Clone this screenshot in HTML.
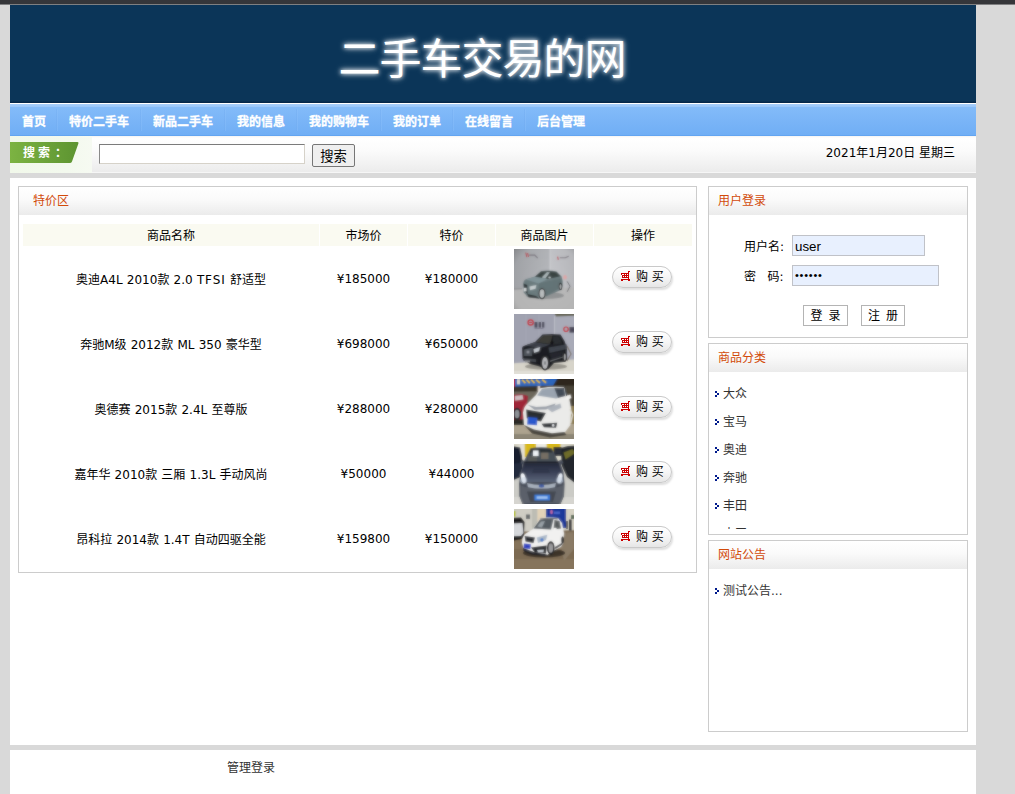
<!DOCTYPE html>
<html lang="zh-CN">
<head>
<meta charset="utf-8">
<title>二手车交易的网</title>
<style>
*{box-sizing:border-box;margin:0;padding:0}
html,body{width:1015px;height:794px;overflow:hidden}
body{background:#d9d9d9;font-family:"DejaVu Sans","Noto Sans CJK SC",sans-serif;font-size:12px;color:#000;position:relative}
.abs{position:absolute}
#topbar{left:0;top:0;width:1015px;height:5px;background:linear-gradient(#35363a 0,#35363a 4px,rgba(53,54,58,.55) 4px,rgba(53,54,58,.55) 5px);z-index:5}
#banner{left:10px;top:5px;width:966px;height:98px;background:linear-gradient(#0b3558 0,#0b3558 96px,#06284a 97px,#06284a 98px)}
#title{left:-11px;top:25px;width:966px;text-align:center;color:#fff;font-size:42px;line-height:60px;letter-spacing:-1px;font-family:"Liberation Sans","Noto Sans CJK SC",sans-serif;text-shadow:0 0 4px #fff,0 0 7px rgba(255,255,255,.6)}
#nav{left:10px;top:103px;width:966px;height:33px;background:linear-gradient(#fff 0,#fff 1px,#a8cffb 1px,#98c6fa 4px,#83bbf9 4px,#70aef5 32px,#63a5f1 32px,#63a5f1 33px)}
.sep{position:absolute;top:6px;width:2px;height:22px;background:linear-gradient(90deg,#6fa9ee 0,#6fa9ee 50%,#8fc2fb 50%,#8fc2fb 100%);opacity:.32}
#nav a{position:absolute;top:0;height:33px;line-height:38px;color:#fff;font-weight:bold;font-size:12px;font-family:"Liberation Sans","Noto Sans CJK SC",sans-serif;text-decoration:none;white-space:nowrap;-webkit-text-stroke:.3px #fff}
#search{left:10px;top:136px;width:966px;height:37px;background:linear-gradient(#f3f3f3 0,#fff 2px,#fbfbfb 40%,#ececec 35.5px,#f6f6f6 36px,#f6f6f6 37px)}
#main{left:10px;top:178px;width:966px;height:567px;background:#fff}
#footer{left:10px;top:750px;width:966px;height:44px;background:#fff}
.panel{border:1px solid #ccc;background:#fff}
.ptitle{position:absolute;left:0;top:0;right:0;height:28px;background:linear-gradient(#fff 0,#fafafa 45%,#ebebeb 100%);color:#d24a0a;font-size:12px;line-height:29px}

#slabelbg{left:0;top:0;width:82px;height:37px;background:linear-gradient(90deg,#f1f8ea 0,#f3f9ee 70%,#f6faf2 100%)}
#slabel{left:0;top:6px;width:69px;height:21px}
#slabeltxt{left:13px;top:7px;width:60px;height:21px;line-height:21px;color:#fff;font-weight:bold;font-size:12px;font-family:"Liberation Serif","Noto Sans CJK SC",sans-serif;white-space:nowrap;letter-spacing:0}
#q{left:89px;top:8px;width:206px;height:20px;border:1px solid #d6d2c9;border-top-color:#7b7b7b;border-left-color:#8a8a8a;background:#fff}
#qbtn{left:302px;top:8px;width:43px;height:23px;border:1px solid #767676;border-radius:2px;background:#efefef;font-size:13.333px;line-height:23px;text-align:center;font-family:"Liberation Sans","Noto Sans CJK SC",sans-serif;color:#000;overflow:hidden}
#date{right:21px;top:8px;height:18px;line-height:18px;font-size:12px;white-space:nowrap}
#special{left:8px;top:8px;width:679px;height:387px}
#tbl{position:absolute;left:4px;top:37px;width:670px}
.th{position:absolute;top:0;height:22px;background:#fafaf1;text-align:center;line-height:25px;overflow:hidden}
.row{position:absolute;left:0;width:670px;height:65px}
.row div{position:absolute;text-align:center;white-space:nowrap;line-height:16px;height:16px}
.c1{left:0;width:296px;top:25px;word-spacing:.4px}
.c2{left:297px;width:87px;top:24px}
.c3{left:385px;width:87px;top:24px}
.pic{left:491px;top:2px;width:60px;height:60px!important;overflow:hidden}
.buy{left:589px;top:19px;width:60px;height:22px!important;border-radius:11px;border:1px solid #c9c9c9;background:linear-gradient(#ffffff 0,#f6f6f6 50%,#e6e6e6 100%);box-shadow:1px 2px 2px rgba(0,0,0,.13);font-family:"DejaVu Sans","Noto Sans CJK SC",sans-serif;font-size:12px}
.buy span{position:absolute;left:23px;top:2px;line-height:16px;letter-spacing:0}
.buy svg{position:absolute;left:8px;top:4px}

#login{left:698px;top:8px;width:260px;height:152px}
#cats{left:698px;top:165px;width:260px;height:192px;overflow:hidden}
#news{left:698px;top:362px;width:260px;height:192px}
.lbl{position:absolute;line-height:18px;white-space:nowrap}
.inp{position:absolute;height:21px;border:1px solid #c0c2c8;background:#e8f0fe;font-size:13.333px;line-height:21px;overflow:hidden;padding-left:2px;font-family:"Liberation Sans","Noto Sans CJK SC",sans-serif}
.btn2{position:absolute;top:118px;height:21px;border:1px solid #b4b4b4;background:#fff;text-align:center;line-height:21px;font-family:"Liberation Sans","Noto Sans CJK SC",sans-serif;font-size:12px;white-space:nowrap;word-spacing:2.7px}
.li{position:absolute;left:6px;height:18px;line-height:20px;color:#333;padding-left:8px;white-space:nowrap}
.li i{position:absolute;left:0;top:7px;width:4px;height:6px}
.li i svg{display:block}
#catclip{position:absolute;left:0;top:28px;width:258px;height:157px;overflow:hidden}
</style>
</head>
<body>
<div id="topbar" class="abs"></div>
<div id="banner" class="abs"><div id="title" class="abs">二手车交易的网</div></div>
<div id="nav" class="abs">
<span class="sep" style="left:46px"></span><span class="sep" style="left:130px"></span><span class="sep" style="left:214px"></span><span class="sep" style="left:286px"></span><span class="sep" style="left:370px"></span><span class="sep" style="left:442px"></span><span class="sep" style="left:514px"></span>
<a style="left:12px">首页</a>
<a style="left:59px">特价二手车</a>
<a style="left:143px">新品二手车</a>
<a style="left:227px">我的信息</a>
<a style="left:299px">我的购物车</a>
<a style="left:383px">我的订单</a>
<a style="left:455px">在线留言</a>
<a style="left:527px">后台管理</a>
</div>
<div id="search" class="abs">
<div id="slabelbg" class="abs"></div>
<svg id="slabel" class="abs" viewBox="0 0 69 21"><defs><linearGradient id="gg" x1="0" x2="1" y1="0" y2="0"><stop offset="0" stop-color="#7cb342"/><stop offset="1" stop-color="#5d9431"/></linearGradient></defs><path d="M0 0H67.5Q69 0 68.4 1.6L62 19.5Q61.4 21 59.8 21H0Z" fill="url(#gg)"/></svg>
<div id="slabeltxt" class="abs">搜 索 <span style="margin-left:2px">：</span></div>
<div id="q" class="abs"></div>
<div id="qbtn" class="abs">搜索</div>
<div id="date" class="abs">2021年1月20日 星期三</div>
</div>
<div id="main" class="abs">
<div id="special" class="abs panel"><div class="ptitle" style="padding-left:14px">特价区</div>
<div id="tbl">
<div class="th" style="left:0;width:296px">商品名称</div><div class="th" style="left:297px;width:87px">市场价</div><div class="th" style="left:385px;width:87px">特价</div><div class="th" style="left:473px;width:97px">商品图片</div><div class="th" style="left:571px;width:98px">操作</div>
<div class="row" style="top:23px"><div class="c1">奥迪A4L 2010款 2.0 <span style="letter-spacing:.9px">TFSI</span> 舒适型</div><div class="c2">¥185000</div><div class="c3">¥180000</div><div class="pic" id="pic1"><svg width="60" height="60" viewBox="0 0 60 60" style="display:block"><defs><filter id="bl1" x="-20%" y="-20%" width="140%" height="140%"><feGaussianBlur stdDeviation="0.85"/></filter></defs><g id="car1"><defs><radialGradient id="v1" cx="55%" cy="55%" r="75%"><stop offset="0" stop-color="#000" stop-opacity="0"/><stop offset=".7" stop-color="#000" stop-opacity=".03"/><stop offset="1" stop-color="#000" stop-opacity=".26"/></radialGradient><linearGradient id="w1" x1="0" x2="1"><stop offset="0" stop-color="#a2a4a8"/><stop offset="1" stop-color="#b6b8bc"/></linearGradient><linearGradient id="w1b" x1="0" x2="1"><stop offset="0" stop-color="#c6c7cb"/><stop offset="1" stop-color="#b8b9bd"/></linearGradient></defs><rect x="-5" y="-5" width="41" height="50" fill="url(#w1)"/><rect x="36" y="-5" width="30" height="50" fill="url(#w1b)"/><rect x="35.6" y="-5" width=".9" height="43" fill="#d3d4d7"/><path d="M-5 40.4L36 38.6L65 38.8V65H-5Z" fill="#bababa"/><path d="M-5 40.2L8 39.8" stroke="#8e8f92" stroke-width="1"/><g opacity=".75"><path d="M11.8 3.6l1 4.6M13.6 4l.9 4" stroke="#c22a35" stroke-width="1" fill="none"/><path d="M15.2 6.2h5.5l3 3" stroke="#6c6670" stroke-width="1.2" fill="none"/><path d="M43.6 7.6l.7 3.2" stroke="#c22a35" stroke-width="1.1" fill="none"/><path d="M45.8 8.8h5.5l3.4-1.6" stroke="#6c6670" stroke-width="1.1" fill="none"/></g><ellipse cx="51" cy="28.3" rx="1.8" ry="2.2" fill="#e8a4a4" opacity=".8"/><path d="M53.2 32.4l2.8 4.8-2.8 5.6" stroke="#66676b" stroke-width=".9" fill="none"/><ellipse cx="31" cy="46.5" rx="19" ry="3.6" fill="#8a8c8d" opacity=".8"/><path d="M9.2 36Q9 31.5 12 30.3L21 27.6L27 22.2Q35 20.6 42.6 22.6L47.6 27.4Q49 31 48.6 37L47 41L33 47L26 49.6L14 48L9.6 43.5Z" fill="#6d7d80"/><path d="M25 34L48 29.5L48.4 37L33 46.5L25 49Z" fill="#647477"/><path d="M21 27.8L27 22.6Q35 21 42.4 23L46.4 27.2L34 30Z" fill="#3b4544"/><path d="M27.6 28.6L33 23L36 23.2L31.4 29.4Z" fill="#aab5b7"/><path d="M12 30.4L21 27.8L34 30L24.6 34.6Z" fill="#82959a"/><path d="M9.6 34.6L10.4 41L13.6 45.6L13.2 36Z" fill="#2c3436"/><rect x="9.7" y="38.8" width="2.9" height="3.6" fill="#d6dadb"/><path d="M15.4 37.4L22.4 36L21.6 39.8L16 41.2Z" fill="#c9d0d2"/><path d="M13.2 45L22 47L25.6 49.4L14.6 48.2Z" fill="#2e3436"/><ellipse cx="28" cy="44.6" rx="3.5" ry="5.7" fill="#2b2f31"/><ellipse cx="28" cy="44.6" rx="2.5" ry="4.4" fill="#bcc0c1"/><ellipse cx="46.5" cy="37.4" rx="1.8" ry="3.7" fill="#2b2f31"/><ellipse cx="46.5" cy="37.4" rx="1" ry="2.5" fill="#b2b6b7"/><ellipse cx="35.6" cy="28.4" rx="1.3" ry="1" fill="#c6ced0"/><rect x="-5" y="-5" width="70" height="70" fill="url(#v1)"/></g><use href="#car1" filter="url(#bl1)" opacity="0.65"/></svg></div><div class="buy"><svg width="10" height="10" viewBox="0 0 10 10" shape-rendering="crispEdges"><path d="M7 0h2v1h-1v7h1v2h-2v-1h-5v1h-2v-2h7v-1h-6v-3h-1v-2h7z" fill="#cc0000"/><path d="M1.4 3.1h1.5v.8h-1.5zM4 3h1v1h-1zM6 3h1v1h-1zM2 5h1v1h-1zM4 5h1v1h-1zM6 5h1v1h-1z" fill="#fff"/></svg><span>购 买</span></div></div>
<div class="row" style="top:88px"><div class="c1">奔驰M级 2012款 ML 350 豪华型</div><div class="c2">¥698000</div><div class="c3">¥650000</div><div class="pic" id="pic2"><svg width="60" height="60" viewBox="0 0 60 60" style="display:block"><defs><filter id="bl2" x="-20%" y="-20%" width="140%" height="140%"><feGaussianBlur stdDeviation="0.85"/></filter></defs><g id="car2"><rect x="-5" y="-5" width="70" height="70" fill="#a0a2b0"/><rect x="40.5" y="-5" width="25" height="60" fill="#a9abb8"/><path d="M12 -5V48M25 -5V47" stroke="#a9abb8" stroke-width=".8"/><path d="M40 -2H65V1.5L42 2.5Z" fill="#6b6a5c"/><rect x="40" y="2" width="1" height="44" fill="#bcbec8"/><path d="M-5 49.4L10 48.6L40 46.4L65 45.4V65H-5Z" fill="#d7d4ca"/><path d="M-5 57H65V65H-5Z" fill="#e2e0d8"/><circle cx="16.6" cy="8.4" r="2.6" fill="none" stroke="#c8303a" stroke-width="1.3"/><path d="M15.2 8.4h2.8" stroke="#c8303a" stroke-width="1"/><rect x="20.5" y="8" width="9.8" height="5.6" fill="#4b4a5a"/><rect x="23.4" y="7.5" width="1.3" height="6.5" fill="#a0a2b0"/><rect x="27" y="7.5" width="1.1" height="6.5" fill="#a0a2b0"/><rect x="20.5" y="14.2" width="9" height=".8" fill="#77768a"/><circle cx="52" cy="15.2" r="2.2" fill="none" stroke="#c8303a" stroke-width="1.2"/><rect x="55.5" y="13" width="6" height="5.6" fill="#4b4a5a"/><path d="M53 32l4 8-4 7" stroke="#7d766e" stroke-width="1.2" fill="none"/><ellipse cx="32" cy="52.4" rx="21" ry="3.2" fill="#8a867e" opacity=".8"/><path d="M8 34Q8 32 11 31.4L21 28L28.5 20.6Q37 19.4 46.5 20.4Q51 26 53 34L53.2 46L50 48L40 49L34 55.4L24 52L16 50L8.5 45Z" fill="#1b1d22"/><path d="M11 31.6L21 28.2L36.5 30.4L26 34.2Z" fill="#3c4149"/><path d="M34.5 33.4L52.6 30.2L53 35L35.5 39Z" fill="#3f444d"/><path d="M35.5 40L53 36.4L53 40L38 46Z" fill="#25282e"/><path d="M22 28L28.8 21.4Q34 20.4 38.6 21L36.2 30Z" fill="#3d3d39"/><path d="M38.8 22L45.6 21.6L48.2 29.6L39.2 30.8Z" fill="#2b2d30"/><path d="M9.8 35.4L18.8 33.6L18 42L9.8 42Z" fill="#50545c"/><circle cx="14" cy="38" r="1.5" fill="#8e9299"/><path d="M19.4 35L26.2 33L25.2 37.2L20 39Z" fill="#c3c8cf"/><path d="M9 44L22 45.2L22 48.2L9 46.6Z" fill="#454850"/><rect x="11" y="46.4" width="5" height="2" fill="#8b8d90"/><ellipse cx="31" cy="49" rx="4.4" ry="7.6" fill="#121315"/><ellipse cx="31" cy="49" rx="3" ry="5.9" fill="#b6b7ba"/><ellipse cx="31" cy="49" rx="1" ry="2" fill="#7a7b7e"/><ellipse cx="50.6" cy="43" rx="2" ry="5" fill="#121315"/><ellipse cx="50.8" cy="43" rx="1" ry="3.5" fill="#a8a9ac"/><ellipse cx="38" cy="28.6" rx="1.4" ry="1.4" fill="#0f1012"/><path d="M36 46.6L49 42.4L49 43.6L36 48Z" fill="#6a6c70"/></g><use href="#car2" filter="url(#bl2)" opacity="0.65"/></svg></div><div class="buy"><svg width="10" height="10" viewBox="0 0 10 10" shape-rendering="crispEdges"><path d="M7 0h2v1h-1v7h1v2h-2v-1h-5v1h-2v-2h7v-1h-6v-3h-1v-2h7z" fill="#cc0000"/><path d="M1.4 3.1h1.5v.8h-1.5zM4 3h1v1h-1zM6 3h1v1h-1zM2 5h1v1h-1zM4 5h1v1h-1zM6 5h1v1h-1z" fill="#fff"/></svg><span>购 买</span></div></div>
<div class="row" style="top:153px"><div class="c1">奥德赛 2015款 2.4L 至尊版</div><div class="c2">¥288000</div><div class="c3">¥280000</div><div class="pic" id="pic3"><svg width="60" height="60" viewBox="0 0 60 60" style="display:block"><defs><filter id="bl3" x="-20%" y="-20%" width="140%" height="140%"><feGaussianBlur stdDeviation="0.85"/></filter></defs><g id="car3"><rect x="-5" y="-5" width="70" height="70" fill="#57524a"/><path d="M-5 -5H47L41 7.4L-5 8Z" fill="#2d66bc"/><path d="M46 -5H65V7H39Z" fill="#2e281f"/><rect x="-2" y="-2" width="2.8" height="10" fill="#d42424"/><rect x="3" y="0" width="3" height="5.4" fill="#ddd8c6"/><path d="M8 .6l3.4 3.6M12.4 .4l3.4 3.8M17 .4l3.6 3.8M22 .6l4 3.4M28 .4l4 3.4" stroke="#e6bc3c" stroke-width="1.8" fill="none"/><path d="M-5 7.8L42 6.6L60 6V11L-5 13.5Z" fill="#3a352c"/><path d="M0 12.5H60V24H0Z" fill="#6d685c"/><rect x="23.6" y="7" width="2.6" height="5.4" fill="#dccfc6"/><rect x="52" y="7" width="9" height="42" fill="#4a4438"/><rect x="56" y="27" width="6" height="20" fill="#8d7d52"/><path d="M-5 45H65V65H-5Z" fill="#ada38f"/><path d="M-5 55H65V65H-5Z" fill="#8d8676"/><path d="M-3 17.6Q0 15 9 15.4L14 17L12.6 30L10 40.6L-3 41.4Z" fill="#9f2839"/><path d="M.6 16.8L8.6 16L9.4 20.6L.8 21.8Z" fill="#cdbcc0"/><ellipse cx="3" cy="35" rx="4.1" ry="6.2" fill="#232327"/><ellipse cx="3" cy="35" rx="2.5" ry="4.3" fill="#8e9196"/><path d="M-3 40.6L10 40.4L10.6 46L-3 46Z" fill="#2b2925"/><path d="M9 33.4Q10 27 14 24L22 16L26 9.2Q38 7.2 50 8.2L52.4 14L55.4 20L57.2 30L56.4 46L50.4 54L38 55.4L20 51.4L10 46Z" fill="#ebebe9"/><path d="M23.2 16.6L27.8 10Q38 8 50 9L51 17L42 19.4Z" fill="#9aa4b0"/><path d="M40.4 9L50 9L51 17L44 18.8Z" fill="#434b56"/><path d="M51.6 10.4L53.4 16.4L52 18L50.8 10Z" fill="#2e333a"/><path d="M13.6 25.8L22 28L32 27.6L41.6 24.6L40.4 27.2L32 30.4L20.6 30.8Z" fill="#979da6"/><path d="M32.6 29L46.4 24.4L47.4 28.8L38 33.2Z" fill="#aeb4bc"/><path d="M12.2 30.6L31.8 34L27 42.4L12.8 39.2Z" fill="#2b2e33"/><rect x="13.4" y="38.4" width="9.8" height="7.4" fill="#2b58cc" transform="rotate(4 18 42)"/><path d="M27.6 44.8L43.2 43.8L42 48.8L30 48.2Z" fill="#2f3236"/><circle cx="39.2" cy="46.4" r="1.3" fill="#eceef0"/><path d="M10 46L20 50.6L38 54.2L50.4 53L52.4 56L36 58.4L18 54.4Z" fill="#4a463f"/><path d="M52 17l4.4-1.6 1 3.6-4.2 2.2Z" fill="#f3f3f1"/><path d="M56 30l2.6 6-2 8.4" stroke="#dcd9cf" stroke-width="1.5" fill="none"/></g><use href="#car3" filter="url(#bl3)" opacity="0.65"/></svg></div><div class="buy"><svg width="10" height="10" viewBox="0 0 10 10" shape-rendering="crispEdges"><path d="M7 0h2v1h-1v7h1v2h-2v-1h-5v1h-2v-2h7v-1h-6v-3h-1v-2h7z" fill="#cc0000"/><path d="M1.4 3.1h1.5v.8h-1.5zM4 3h1v1h-1zM6 3h1v1h-1zM2 5h1v1h-1zM4 5h1v1h-1zM6 5h1v1h-1z" fill="#fff"/></svg><span>购 买</span></div></div>
<div class="row" style="top:218px"><div class="c1">嘉年华 2010款 三厢 1.3L 手动风尚</div><div class="c2">¥50000</div><div class="c3">¥44000</div><div class="pic" id="pic4"><svg width="60" height="60" viewBox="0 0 60 60" style="display:block"><defs><filter id="bl4" x="-20%" y="-20%" width="140%" height="140%"><feGaussianBlur stdDeviation="0.85"/></filter></defs><g id="car4"><defs><linearGradient id="h4" x1="0" x2="0" y1="0" y2="1"><stop offset="0" stop-color="#25293a"/><stop offset=".45" stop-color="#394056"/><stop offset="1" stop-color="#5c667a"/></linearGradient></defs><rect x="-5" y="-5" width="70" height="70" fill="#cbcbc6"/><rect x="-5" y="-5" width="70" height="24" fill="#dcd9cb"/><rect x="10.5" y="-5" width="11.5" height="18" fill="#d9ba1c"/><rect x="32.5" y="-5" width="14" height="12.5" fill="#d9ba1c"/><rect x="22" y="-5" width="10.5" height="9" fill="#efeee6"/><rect x="5.5" y="-5" width="5" height="20" fill="#e6e3d8"/><path d="M-5 1.5L6 3.5L8 12L8.5 22L6.5 33L-5 38Z" fill="#191f2e"/><path d="M-5 20L8 19L6.5 32L-5 37Z" fill="#222a3e"/><path d="M46.5 4L54 2L65 1.5V42L53 33L48 22Z" fill="#23272d"/><path d="M39.5 3h8v9h-8z" fill="#2b2f37"/><path d="M49.5 8.5l9-3.5 3 4-10 6.5z" fill="#6e6c2a"/><path d="M10 17L16.5 4.2Q27 2.4 37.8 4.2L44 17L47.5 15.5L49.5 18.5L47 21L49.5 28L50.6 40L50 52L47 59L41 61.5H14L8 59L5.4 52L5 40L6.6 28L9 21L6.5 18.5L8.5 15.5Z" fill="#4a505c"/><path d="M11.5 17.6L17 5Q27 3.3 37.2 5L43 17.6Z" fill="#475056"/><path d="M17 5Q27 3.3 37.2 5L38.6 8.4H15.6Z" fill="#2c3236"/><rect x="19" y="6.4" width="5.6" height="5.6" fill="#eef3f6"/><rect x="27" y="8.6" width="7.5" height="6.4" fill="#756e64"/><rect x="14" y="12" width="9" height="5" fill="#565a58"/><path d="M10.5 17.4H44L44.6 19.6H9.9Z" fill="#1a1d26"/><path d="M9.8 19.4H44.8L48.8 31L49.6 38H6.2L7 31Z" fill="url(#h4)"/><path d="M20 24h14l2 5H18z" fill="#2e3448" opacity=".7"/><ellipse cx="9.3" cy="34.2" rx="2.3" ry="5" fill="#f4f8fc" transform="rotate(-14 9.3 34.2)"/><ellipse cx="45.9" cy="34.2" rx="2.3" ry="5" fill="#e9eff6" transform="rotate(14 45.9 34.2)"/><ellipse cx="9.6" cy="36.5" rx="3.4" ry="3.4" fill="#c8d4e2" opacity=".55"/><ellipse cx="45.6" cy="36.5" rx="3.4" ry="3.4" fill="#c8d4e2" opacity=".55"/><path d="M13 39Q27.5 43 42 39L41 43.2Q27.5 46.2 14 43.2Z" fill="#a7b0bc"/><ellipse cx="27.5" cy="41.9" rx="2.8" ry="1.6" fill="#3f5aa2"/><path d="M6 41L14 44Q27.5 47 41 44L49.6 41L50 52L47 59H8L5.4 52Z" fill="#5b616b"/><path d="M13 47.5H42L39 58H16Z" fill="#454a52"/><rect x="20.4" y="50.6" width="15.6" height="5.9" fill="#3b7ada"/><rect x="22.6" y="52.3" width="11" height="2.5" fill="#a6c6f0"/><path d="M8 58.5L14 61.5H41L47 58.5L47 65H8Z" fill="#707276"/><path d="M-5 53H5.4L8 59.5L9 65H-5ZM65 53H50L47 59.5L46.4 65H65Z" fill="#d6d5d0"/></g><use href="#car4" filter="url(#bl4)" opacity="0.65"/></svg></div><div class="buy"><svg width="10" height="10" viewBox="0 0 10 10" shape-rendering="crispEdges"><path d="M7 0h2v1h-1v7h1v2h-2v-1h-5v1h-2v-2h7v-1h-6v-3h-1v-2h7z" fill="#cc0000"/><path d="M1.4 3.1h1.5v.8h-1.5zM4 3h1v1h-1zM6 3h1v1h-1zM2 5h1v1h-1zM4 5h1v1h-1zM6 5h1v1h-1z" fill="#fff"/></svg><span>购 买</span></div></div>
<div class="row" style="top:283px"><div class="c1">昂科拉 2014款 1.4T 自动四驱全能</div><div class="c2">¥159800</div><div class="c3">¥150000</div><div class="pic" id="pic5"><svg width="60" height="60" viewBox="0 0 60 60" style="display:block"><defs><filter id="bl5" x="-20%" y="-20%" width="140%" height="140%"><feGaussianBlur stdDeviation="0.85"/></filter></defs><g id="car5"><rect x="-5" y="-5" width="70" height="70" fill="#cfcdc4"/><rect x="18" y="-5" width="5.5" height="30" fill="#bdbdb4"/><rect x="23.5" y="-5" width="9" height="24" fill="#e3d3b8"/><rect x="32" y="-5" width="20" height="24" fill="#1b399a"/><ellipse cx="37.5" cy="3" rx="1.4" ry="2.2" fill="#c46aa8"/><rect x="40" y="2.5" width="6" height="2.6" fill="#4a66c8"/><rect x="52" y="-5" width="13" height="28" fill="#d6d2c4"/><rect x="57" y="6" width="4" height="4" fill="#5a6a58"/><rect x="-2" y="2" width="3.5" height="5.5" fill="#b7c23a"/><rect x="12" y="5.5" width="4" height="4.5" fill="#64686a"/><path d="M-5 23L65 21V65H-5Z" fill="#7c6a52"/><path d="M-5 30L65 27V40H-5Z" fill="#85735a"/><path d="M-5 50H65V65H-5Z" fill="#86745c"/><path d="M44 24L60 23L60 40L50 52Z" fill="#8a7b66"/><rect x="55" y="10.5" width="2.6" height="11" fill="#2a2a30"/><rect x="52.2" y="12" width="1.6" height="8" fill="#3a3a3e"/><path d="M-3 9L7 8.5L10.5 13L10 26L8 30L-3 32Z" fill="#1b1b1c"/><path d="M-3 14.5L8.5 14L9.5 24L7 27L-3 27.5Z" fill="#d6d8db"/><ellipse cx="30" cy="44" rx="21" ry="4.5" fill="#3d3429"/><path d="M8 34Q8 28 11 25L19 20L26 9.5Q33 7.5 44 9L48 14L50 24L49.5 34L47 38L41 41L33 46L20 44.5L10 41Z" fill="#f1f1f0"/><path d="M19.5 19.5L26 10.5Q32 9.2 39.5 10L37 20.5Z" fill="#555c62"/><path d="M23 17.6L27 12.5L31 12L28 18.4Z" fill="#98a0a6"/><path d="M40.5 11L45.5 12L47 19.5L39.5 20.5Z" fill="#5a5e60"/><path d="M26 9.6Q34 8 44 9.2L43.5 10.5Q34 9 26.5 10.6Z" fill="#6a6c70"/><path d="M10.7 27L20.9 28.5L19.5 34L11.5 32.5Z" fill="#2c2f35"/><path d="M22.6 28.5L33.3 25.8L32 31L24 34Z" fill="#aab8c8"/><ellipse cx="28" cy="31" rx="1.6" ry="1.8" fill="#4a78c8"/><rect x="9.8" y="34.8" width="6.8" height="4.8" fill="#2a3cc0" transform="rotate(6 13 37)"/><path d="M17 38.5L32.6 36.6L32 44.4L21 43.4Z" fill="#1f2126"/><path d="M23 41L30 40.5L29.5 43.5L24 43.5Z" fill="#c9ced4"/><path d="M9 39L20 43L33 45.5L32 47L18 45.5L9.5 42Z" fill="#26262a"/><ellipse cx="36.8" cy="39" rx="3.8" ry="6.8" fill="#1c1c1e"/><ellipse cx="36.8" cy="39" rx="2.4" ry="4.8" fill="#9c9c9e"/><path d="M41 38L48.5 33.5L48.5 35.5L41.5 40Z" fill="#4a4a4c"/><ellipse cx="48.6" cy="31" rx="1.3" ry="3.6" fill="#222"/><ellipse cx="41" cy="20" rx="1.8" ry="1.3" fill="#f7f7f6"/></g><use href="#car5" filter="url(#bl5)" opacity="0.65"/></svg></div><div class="buy"><svg width="10" height="10" viewBox="0 0 10 10" shape-rendering="crispEdges"><path d="M7 0h2v1h-1v7h1v2h-2v-1h-5v1h-2v-2h7v-1h-6v-3h-1v-2h7z" fill="#cc0000"/><path d="M1.4 3.1h1.5v.8h-1.5zM4 3h1v1h-1zM6 3h1v1h-1zM2 5h1v1h-1zM4 5h1v1h-1zM6 5h1v1h-1z" fill="#fff"/></svg><span>购 买</span></div></div>
</div>
</div>
<div id="login" class="abs panel"><div class="ptitle" style="padding-left:9px">用户登录</div>
<div class="lbl" style="left:35px;top:51px">用户名:</div><div class="inp" style="left:83px;top:48px;width:133px">user</div>
<div class="lbl" style="left:35px;top:81px">密&nbsp;&nbsp;&nbsp;码:</div><div class="inp" style="left:83px;top:78px;width:147px;font-size:11px;letter-spacing:.75px;line-height:19px">••••••</div>
<div class="btn2" style="left:94px;width:45px">登 录</div><div class="btn2" style="left:152px;width:44px">注 册</div>
</div>
<div id="cats" class="abs panel"><div class="ptitle" style="padding-left:9px">商品分类</div><div id="catclip"><div class="li" style="top:12px"><i><svg width="4" height="6" viewBox="0 0 4 6" shape-rendering="crispEdges"><path d="M0 0h2v2h-2zM2 2h2v2h-2zM0 4h2v2h-2z" fill="#001a8c"/></svg></i>大众</div><div class="li" style="top:40px"><i><svg width="4" height="6" viewBox="0 0 4 6" shape-rendering="crispEdges"><path d="M0 0h2v2h-2zM2 2h2v2h-2zM0 4h2v2h-2z" fill="#001a8c"/></svg></i>宝马</div><div class="li" style="top:68px"><i><svg width="4" height="6" viewBox="0 0 4 6" shape-rendering="crispEdges"><path d="M0 0h2v2h-2zM2 2h2v2h-2zM0 4h2v2h-2z" fill="#001a8c"/></svg></i>奥迪</div><div class="li" style="top:96px"><i><svg width="4" height="6" viewBox="0 0 4 6" shape-rendering="crispEdges"><path d="M0 0h2v2h-2zM2 2h2v2h-2zM0 4h2v2h-2z" fill="#001a8c"/></svg></i>奔驰</div><div class="li" style="top:124px"><i><svg width="4" height="6" viewBox="0 0 4 6" shape-rendering="crispEdges"><path d="M0 0h2v2h-2zM2 2h2v2h-2zM0 4h2v2h-2z" fill="#001a8c"/></svg></i>丰田</div><div class="li" style="top:152px"><i><svg width="4" height="6" viewBox="0 0 4 6" shape-rendering="crispEdges"><path d="M0 0h2v2h-2zM2 2h2v2h-2zM0 4h2v2h-2z" fill="#001a8c"/></svg></i>本田</div></div></div>
<div id="news" class="abs panel"><div class="ptitle" style="padding-left:9px">网站公告</div><div class="li" style="top:40px"><i><svg width="4" height="6" viewBox="0 0 4 6" shape-rendering="crispEdges"><path d="M0 0h2v2h-2zM2 2h2v2h-2zM0 4h2v2h-2z" fill="#001a8c"/></svg></i>测试公告...</div></div>
</div>
<div id="footer" class="abs"><div class="abs" style="left:217px;top:9px;line-height:18px;color:#333">管理登录</div></div>
</body>
</html>
